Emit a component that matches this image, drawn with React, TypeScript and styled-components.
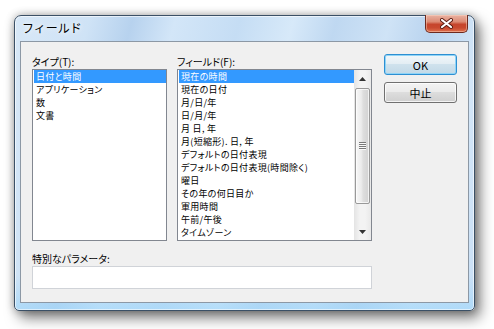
import React from "react";
import styled, { createGlobalStyle } from "styled-components";

const Global = createGlobalStyle`
  html, body { margin: 0; padding: 0; background: #ffffff; }
  body { font-family: "Noto Sans CJK JP", "Noto Sans", sans-serif; }
`;

const Page = styled.div`
  width: 494px;
  height: 329px;
  box-sizing: border-box;
  padding: 15px 0 0 14px;
  overflow: hidden;
`;

const Window = styled.div`
  width: 461px;
  height: 296px;
  box-sizing: border-box;
  display: flex;
  flex-direction: column;
  padding: 0 5px 7px 5px;
  border: 1px solid #3b5066;
  border-radius: 7px 7px 5px 5px;
  background:
    linear-gradient(180deg, rgba(255,255,255,0) 0%, rgba(255,255,255,0) 88%, rgba(160,215,250,0.65) 100%),
    linear-gradient(105deg, #d8e8f7 0%, #cfe3f6 14%, #b7d2ee 22%, #d3e6f8 30%, #c5ddf4 42%, #d7e9f9 52%, #bfd8f1 60%, #cfe3f6 70%, #bad4ef 78%, #d3e6f8 88%, #c9dff5 100%);
  box-shadow:
    inset 0 0 0 1px rgba(255, 255, 255, 0.6),
    5px 7px 14px rgba(0, 0, 0, 0.5),
    0 0 8px rgba(0, 0, 0, 0.3);
`;

const TitleBar = styled.div`
  height: 26px;
  display: flex;
  align-items: flex-start;
  justify-content: space-between;
`;

const Title = styled.div`
  font-size: 12px;
  line-height: 16px;
  padding: 4px 0 0 2px;
  color: #000;
  text-shadow: 0 0 4px rgba(255, 255, 255, 0.9), 0 0 8px rgba(255, 255, 255, 0.8);
`;

const CloseButton = styled.div`
  width: 43px;
  height: 18px;
  box-sizing: border-box;
  margin: -1px 1px 0 0;
  border: 1px solid #6e2a1f;
  border-top: none;
  border-radius: 0 0 5px 5px;
  display: flex;
  align-items: center;
  justify-content: center;
  background: linear-gradient(180deg, #e9b2a3 0%, #dc8b74 40%, #c6452c 55%, #c8492f 75%, #e0714f 100%);
  box-shadow: inset 0 0 0 1px rgba(255, 220, 200, 0.45);
`;

const Client = styled.div`
  flex: 1;
  display: flex;
  gap: 12px;
  padding: 12px 11px 13px 11px;
  border: 1px solid #8c98a5;
  background: #f0f0f0;
`;

const LeftColumn = styled.div`
  width: 340px;
  display: flex;
  flex-direction: column;
`;

const ListsRow = styled.div`
  display: flex;
  gap: 10px;
`;

const Group = styled.div`
  display: flex;
  flex-direction: column;
`;

const Label = styled.div<{ $gap?: number }>`
  height: 15px;
  line-height: 15px;
  margin-top: ${(p) => p.$gap ?? 0}px;
  font-size: 10px;
  color: #000;
  white-space: nowrap;
  font-feature-settings: "palt";
`;

const ListBox = styled.div<{ $w: number }>`
  width: ${(p) => p.$w}px;
  height: 172px;
  box-sizing: border-box;
  border: 1px solid #828790;
  background: #fff;
  display: flex;
  overflow: hidden;
`;

const Items = styled.div`
  flex: 1;
  display: flex;
  flex-direction: column;
  padding-left: 1px;
  min-width: 0;
`;

const Item = styled.div<{ $selected?: boolean }>`
  height: 13px;
  line-height: 13px;
  font-size: 9px;
  letter-spacing: 0.3px;
  padding-left: 2px;
  white-space: nowrap;
  font-feature-settings: "palt";
  background: ${(p) => (p.$selected ? "#3399ff" : "transparent")};
  color: ${(p) => (p.$selected ? "#ffffff" : "#000000")};
`;

const ScrollBar = styled.div`
  width: 17px;
  flex-shrink: 0;
  display: flex;
  flex-direction: column;
  background: linear-gradient(90deg, #e4e4e4 0%, #f3f3f3 35%, #f3f3f3 65%, #e9e9e9 100%);
`;

const ArrowButton = styled.div`
  height: 17px;
  display: flex;
  align-items: center;
  justify-content: center;
`;

const Track = styled.div`
  flex: 1;
  padding-top: 1px;
  display: flex;
  flex-direction: column;
`;

const Thumb = styled.div`
  height: 116px;
  margin: 0 1px;
  box-sizing: border-box;
  border: 1px solid #999999;
  border-radius: 2px;
  display: flex;
  align-items: center;
  justify-content: center;
  background: linear-gradient(90deg, #f7f7f7 0%, #ececec 40%, #dedede 55%, #d2d2d2 100%);
  box-shadow: inset 0 0 0 1px rgba(255, 255, 255, 0.7);
`;

const TextInput = styled.div`
  height: 23px;
  box-sizing: border-box;
  border: 1px solid #d0d3d8;
  background: #fff;
`;

const RightColumn = styled.div`
  display: flex;
  flex-direction: column;
  gap: 7px;
`;

const Button = styled.div<{ $primary?: boolean }>`
  width: 73px;
  height: 21px;
  box-sizing: border-box;
  border-radius: 3px;
  display: flex;
  align-items: center;
  justify-content: center;
  font-size: 11px;
  color: #000;
  border: 1px solid ${(p) => (p.$primary ? "#2d8fd2" : "#707070")};
  background: ${(p) =>
    p.$primary
      ? "linear-gradient(180deg, #f1f7fa 0%, #e4eef4 45%, #cfe2ed 50%, #c2d9e7 100%)"
      : "linear-gradient(180deg, #f3f3f3 0%, #ebebeb 45%, #dddddd 50%, #cfcfcf 100%)"};
  box-shadow: ${(p) =>
    p.$primary
      ? "inset 0 0 0 1px #8fd4f7"
      : "inset 0 0 0 1px rgba(255,255,255,0.75)"};
`;

const UpArrow = () => (
  <svg width="7" height="4" viewBox="0 0 7 4">
    <path d="M3.5 0 L7 4 L0 4 Z" fill="#333" />
  </svg>
);

const DownArrow = () => (
  <svg width="7" height="4" viewBox="0 0 7 4">
    <path d="M0 0 L7 0 L3.5 4 Z" fill="#333" />
  </svg>
);

const Grip = () => (
  <svg width="7" height="8" viewBox="0 0 7 8">
    <rect x="0" y="0" width="7" height="1" fill="#7a7a7a" />
    <rect x="0" y="1" width="7" height="1" fill="#fafafa" />
    <rect x="0" y="2" width="7" height="1" fill="#7a7a7a" />
    <rect x="0" y="3" width="7" height="1" fill="#fafafa" />
    <rect x="0" y="4" width="7" height="1" fill="#7a7a7a" />
    <rect x="0" y="5" width="7" height="1" fill="#fafafa" />
    <rect x="0" y="6" width="7" height="1" fill="#7a7a7a" />
    <rect x="0" y="7" width="7" height="1" fill="#fafafa" />
  </svg>
);

const CloseX = () => (
  <svg width="13" height="11" viewBox="0 0 13 11">
    <path d="M2 2 L11 9 M11 2 L2 9" stroke="#5a1b12" strokeWidth="4" strokeLinecap="round" />
    <path d="M2 2 L11 9 M11 2 L2 9" stroke="#ffffff" strokeWidth="2.2" strokeLinecap="round" />
  </svg>
);

const typeItems = ["日付と時間", "アプリケーション", "数", "文書"];

const fieldItems = [
  "現在の時間",
  "現在の日付",
  "月/日/年",
  "日/月/年",
  "月 日, 年",
  "月(短縮形). 日, 年",
  "デフォルトの日付表現",
  "デフォルトの日付表現(時間除く)",
  "曜日",
  "その年の何日目か",
  "軍用時間",
  "午前/午後",
  "タイムゾーン",
];

export default function App() {
  return (
    <>
      <Global />
      <Page>
        <Window>
          <TitleBar>
            <Title>フィールド</Title>
            <CloseButton>
              <CloseX />
            </CloseButton>
          </TitleBar>
          <Client>
            <LeftColumn>
              <ListsRow>
                <Group>
                  <Label>タイプ(T):</Label>
                  <ListBox $w={135}>
                    <Items>
                      {typeItems.map((t, i) => (
                        <Item key={t} $selected={i === 0}>
                          {t}
                        </Item>
                      ))}
                    </Items>
                  </ListBox>
                </Group>
                <Group>
                  <Label>フィールド(F):</Label>
                  <ListBox $w={195}>
                    <Items>
                      {fieldItems.map((t, i) => (
                        <Item key={t} $selected={i === 0}>
                          {t}
                        </Item>
                      ))}
                    </Items>
                    <ScrollBar>
                      <ArrowButton>
                        <UpArrow />
                      </ArrowButton>
                      <Track>
                        <Thumb>
                          <Grip />
                        </Thumb>
                      </Track>
                      <ArrowButton>
                        <DownArrow />
                      </ArrowButton>
                    </ScrollBar>
                  </ListBox>
                </Group>
              </ListsRow>
              <Label $gap={10}>特別なパラメータ:</Label>
              <TextInput />
            </LeftColumn>
            <RightColumn>
              <Button $primary>OK</Button>
              <Button>中止</Button>
            </RightColumn>
          </Client>
        </Window>
      </Page>
    </>
  );
}
